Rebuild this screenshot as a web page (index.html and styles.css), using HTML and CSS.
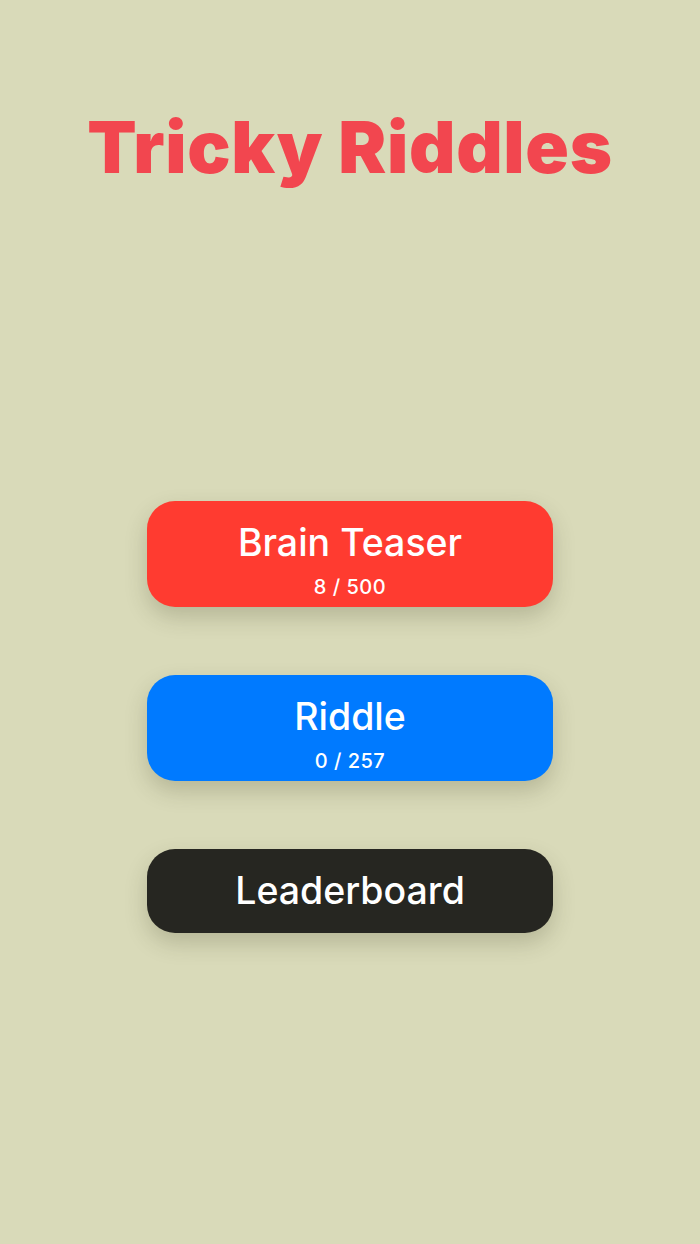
FILE: index.html
```html
<!DOCTYPE html>
<html>
<head>
<meta charset="utf-8">
<link rel="stylesheet" href="styles.css">
</head>
<body>
<main class="screen">
  <h1 class="title">Tricky Riddles</h1>
  <div class="menu">
    <button class="btn btn-red"><span class="btn-title">Brain Teaser</span><span class="btn-sub">8 / 500</span></button>
    <button class="btn btn-blue"><span class="btn-title">Riddle</span><span class="btn-sub">0 / 257</span></button>
    <button class="btn btn-dark btn-short"><span class="btn-title">Leaderboard</span></button>
  </div>
</main>
</body>
</html>
```
FILE: styles.css
```css
html, body {
  margin: 0;
  padding: 0;
}
body {
  background: #d9dab9;
  font-family: Inter, "Noto Sans", sans-serif;
  width: 700px;
  height: 1244px;
  overflow: hidden;
}
.screen {
  display: flex;
  flex-direction: column;
  align-items: center;
}
.title {
  margin: 103px 0 0 0;
  font-size: 72px;
  line-height: 88px;
  font-weight: 900;
  color: #f2464f;
  letter-spacing: 0.7px;
}
.menu {
  margin-top: 310px;
  display: flex;
  flex-direction: column;
  gap: 68px;
}
.btn {
  width: 406px;
  height: 106px;
  border: none;
  border-radius: 28px;
  color: #fff;
  font-family: inherit;
  display: flex;
  flex-direction: column;
  align-items: center;
  justify-content: flex-start;
  padding: 18px 0 0 0;
  box-sizing: border-box;
  box-shadow: 0 10px 22px rgba(60, 60, 30, 0.22);
}
.btn-short {
  height: 84px;
  padding: 0;
  justify-content: center;
}
.btn-red { background: #ff3b30; }
.btn-blue { background: #007aff; }
.btn-dark { background: #262621; }
.btn-title {
  font-size: 37.5px;
  font-weight: 500;
  line-height: 48px;
}
.btn-sub {
  font-size: 20px;
  font-weight: 500;
  line-height: 24px;
  margin-top: 8px;
  letter-spacing: 0.5px;
}
```
